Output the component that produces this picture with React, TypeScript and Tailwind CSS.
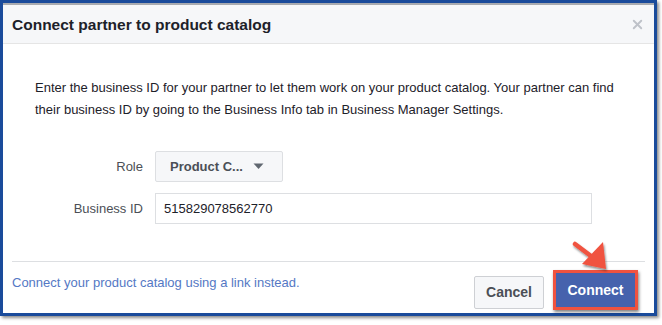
import { X } from 'lucide-react';

const font = { fontFamily: '"Liberation Sans", Arial, Helvetica, sans-serif' };

function Arrow() {
  return (
    <svg
      className="absolute left-[569px] top-[237px]"
      width="46"
      height="38"
      viewBox="0 0 46 38"
    >
      <defs>
        <filter id="sh" x="-30%" y="-30%" width="160%" height="160%">
          <feDropShadow dx="1" dy="2" stdDeviation="1.2" floodColor="#000" floodOpacity="0.45" />
        </filter>
      </defs>
      <g filter="url(#sh)">
        <path d="M6 7 L26 22" stroke="#f0523f" strokeWidth="4.5" strokeLinecap="round" />
        <path d="M34 5 L37 32 L13 27 Z" fill="#f0523f" />
      </g>
    </svg>
  );
}

export default function App() {
  return (
    <div className="relative w-[662px] h-[325px] bg-white" style={font}>
      <div className="w-[657px] h-[316px] border-[3px] border-[#1a4b9b] shadow-[2px_2px_3px_rgba(0,0,0,0.45)] flex flex-col bg-white">
        {/* header */}
        <div className="h-[41px] border-t-2 border-[#a9abb0] bg-[#f6f7f9] border-b border-b-[#e5e5e5] flex items-center justify-between pl-[9px] pr-[9px]">
          <h1 className="text-[15.5px] font-bold text-[#1d2129] leading-none mt-[1px]">
            Connect partner to product catalog
          </h1>
          <X size={15} strokeWidth={3} className="text-[#bec2c9]" />
        </div>

        {/* body */}
        <div className="flex-1 pl-[32px] pr-[24px] pt-[33px]">
          <p className="text-[13px] leading-[22px] text-[#1d2129]">
            Enter the business ID for your partner to let them work on your product catalog. Your partner can find
            their business ID by going to the Business Info tab in Business Manager Settings.
          </p>

          <div className="mt-[30px] flex flex-col gap-[11px]">
            <div className="flex items-center">
              <span className="w-[108px] text-right text-[13px] text-[#4b4f56]">Role</span>
              <button className="ml-[12px] w-[128px] h-[31px] bg-[#f6f7f9] border border-[#dddfe2] rounded-[2px] flex items-center pl-[14px] gap-[10px] text-[13px] font-bold text-[#4b4f56]">
                <span>Product C...</span>
                <svg width="11" height="7" viewBox="0 0 11 7">
                  <path d="M0.5 0.5 H10.5 L5.5 6 Z" fill="#606770" />
                </svg>
              </button>
            </div>
            <div className="flex items-center">
              <span className="w-[108px] text-right text-[13px] text-[#4b4f56]">Business ID</span>
              <div className="ml-[12px] w-[437px] h-[31px] border border-[#dddfe2] flex items-center pl-[8px] text-[13px] text-[#1d2129]">
                515829078562770
              </div>
            </div>
          </div>
        </div>

        {/* footer */}
        <div className="h-[52px] mx-[9px] border-t border-[#dddfe2] flex justify-between items-start pt-[11px]">
          <a className="text-[13px] leading-[16px] pt-[2px] text-[#5478c4]">
            Connect your product catalog using a link instead.
          </a>
          <div className="flex items-center gap-[9px] mr-[7px]">
            <button className="w-[70px] h-[33px] mt-[1px] bg-[#f6f7f9] border border-[#ced0d4] rounded-[2px] text-[14px] font-bold text-[#4b4f56]">
              Cancel
            </button>
            <div className="border-[3px] border-[#f0523f] shadow-[1px_2px_3px_rgba(0,0,0,0.5)] -mt-[3px]">
              <button className="w-[79px] h-[34px] bg-[#4662ad] text-[14px] font-bold text-white">
                Connect
              </button>
            </div>
          </div>
        </div>
      </div>
      <Arrow />
    </div>
  );
}
